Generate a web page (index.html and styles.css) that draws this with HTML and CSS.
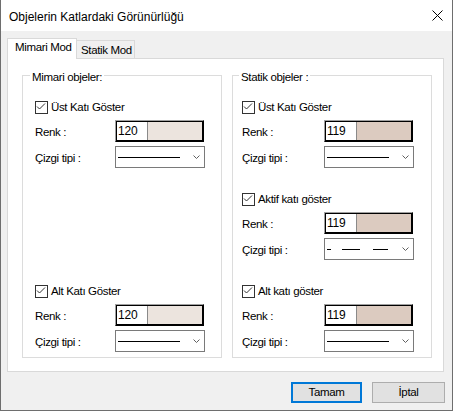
FILE: index.html
```html
<!DOCTYPE html>
<html>
<head>
<meta charset="utf-8">
<link rel="stylesheet" href="styles.css">
</head>
<body>
<div class="window">
  <div class="titlebar">
    <span class="title">Objelerin Katlardaki Görünürlüğü</span>
    <svg class="close" width="11" height="11" viewBox="0 0 11 11"><path d="M0.5 0.5L10.5 10.5M10.5 0.5L0.5 10.5" stroke="#000" stroke-width="1" fill="none"/></svg>
  </div>
  <div class="client">
    <div class="tabs">
      <div class="tab tab-active">Mimari Mod</div>
      <div class="tab tab-idle">Statik Mod</div>
    </div>
    <div class="page">
      <div class="group group-left">
        <div class="legend">Mimari objeler:</div>
        <div class="block block-first">
          <div class="check"><span class="box"><svg width="11" height="11" viewBox="0 0 11 11"><path d="M1 4.5L3.5 7L9 1.5" stroke="#333" stroke-width="1" fill="none"/></svg></span><span>Üst Katı Göster</span></div>
          <div class="row row-color"><span class="label">Renk :</span><div class="colorbox"><div class="colorinner"><span class="num">120</span><span class="swatch swatch-a"></span></div></div></div>
          <div class="row row-combo"><span class="label">Çizgi tipi :</span><div class="combo"><span class="solid"></span><svg class="chev" width="7" height="4" viewBox="0 0 7 4"><path d="M0.5 0.5L3.5 3.5L6.5 0.5" stroke="#606060" stroke-width="1" fill="none"/></svg></div></div>
        </div>
        <div class="block block-bottom">
          <div class="check"><span class="box"><svg width="11" height="11" viewBox="0 0 11 11"><path d="M1 4.5L3.5 7L9 1.5" stroke="#333" stroke-width="1" fill="none"/></svg></span><span>Alt Katı Göster</span></div>
          <div class="row row-color"><span class="label">Renk :</span><div class="colorbox"><div class="colorinner"><span class="num">120</span><span class="swatch swatch-a"></span></div></div></div>
          <div class="row row-combo"><span class="label">Çizgi tipi :</span><div class="combo"><span class="solid"></span><svg class="chev" width="7" height="4" viewBox="0 0 7 4"><path d="M0.5 0.5L3.5 3.5L6.5 0.5" stroke="#606060" stroke-width="1" fill="none"/></svg></div></div>
        </div>
      </div>
      <div class="group group-right">
        <div class="legend">Statik objeler :</div>
        <div class="block block-first">
          <div class="check"><span class="box"><svg width="11" height="11" viewBox="0 0 11 11"><path d="M1 4.5L3.5 7L9 1.5" stroke="#333" stroke-width="1" fill="none"/></svg></span><span>Üst Katı Göster</span></div>
          <div class="row row-color"><span class="label">Renk :</span><div class="colorbox"><div class="colorinner"><span class="num">119</span><span class="swatch swatch-b"></span></div></div></div>
          <div class="row row-combo"><span class="label">Çizgi tipi :</span><div class="combo"><span class="solid"></span><svg class="chev" width="7" height="4" viewBox="0 0 7 4"><path d="M0.5 0.5L3.5 3.5L6.5 0.5" stroke="#606060" stroke-width="1" fill="none"/></svg></div></div>
        </div>
        <div class="block block-next">
          <div class="check"><span class="box"><svg width="11" height="11" viewBox="0 0 11 11"><path d="M1 4.5L3.5 7L9 1.5" stroke="#333" stroke-width="1" fill="none"/></svg></span><span>Aktif katı göster</span></div>
          <div class="row row-color"><span class="label">Renk :</span><div class="colorbox"><div class="colorinner"><span class="num">119</span><span class="swatch swatch-b"></span></div></div></div>
          <div class="row row-combo"><span class="label">Çizgi tipi :</span><div class="combo"><svg class="dashed" width="62" height="1" viewBox="0 0 62 1"><rect x="0" y="0" width="4" height="1" fill="#000"/><rect x="15" y="0" width="18" height="1" fill="#000"/><rect x="46" y="0" width="15" height="1" fill="#000"/></svg><svg class="chev" width="7" height="4" viewBox="0 0 7 4"><path d="M0.5 0.5L3.5 3.5L6.5 0.5" stroke="#606060" stroke-width="1" fill="none"/></svg></div></div>
        </div>
        <div class="block block-next">
          <div class="check"><span class="box"><svg width="11" height="11" viewBox="0 0 11 11"><path d="M1 4.5L3.5 7L9 1.5" stroke="#333" stroke-width="1" fill="none"/></svg></span><span>Alt katı göster</span></div>
          <div class="row row-color"><span class="label">Renk :</span><div class="colorbox"><div class="colorinner"><span class="num">119</span><span class="swatch swatch-b"></span></div></div></div>
          <div class="row row-combo"><span class="label">Çizgi tipi :</span><div class="combo"><span class="solid"></span><svg class="chev" width="7" height="4" viewBox="0 0 7 4"><path d="M0.5 0.5L3.5 3.5L6.5 0.5" stroke="#606060" stroke-width="1" fill="none"/></svg></div></div>
        </div>
      </div>
    </div>
    <div class="buttons">
      <button class="btn btn-default">Tamam</button>
      <button class="btn btn-cancel">İptal</button>
    </div>
  </div>
</div>
</body>
</html>
```
FILE: styles.css
```css
html, body {
  margin: 0;
  padding: 0;
  background: #f0f0f0;
}
body {
  font-family: "Liberation Sans", Arial, sans-serif;
  font-size: 11.5px;
  line-height: 13px;
  letter-spacing: -0.35px;
  color: #000;
}
.window {
  width: 453px;
  height: 411px;
  box-sizing: border-box;
  border-left: 1px solid #6e6e6e;
  border-right: 1px solid #6e6e6e;
  border-bottom: 1px solid #6e6e6e;
  background: #f0f0f0;
  display: flex;
  flex-direction: column;
}
.titlebar {
  height: 31px;
  background: #fff;
  display: flex;
  align-items: center;
  justify-content: space-between;
  padding: 0 9px 0 8px;
  flex-shrink: 0;
}
.title {
  font-size: 12px;
  line-height: 14px;
  letter-spacing: 0;
  padding-top: 2px;
}
.close {
  display: block;
}
.client {
  padding: 7px 8px 0 6px;
  display: flex;
  flex-direction: column;
}
.tabs {
  display: flex;
  align-items: flex-end;
  height: 20px;
}
.tab {
  box-sizing: border-box;
  border: 1px solid #d9d9d9;
  border-bottom: 0;
  white-space: nowrap;
}
.tab-active {
  width: 70px;
  height: 21px;
  margin-bottom: -1px;
  background: #fff;
  padding: 2px 0 0 7px;
  position: relative;
  z-index: 1;
}
.tab-idle {
  width: 58px;
  height: 18px;
  border-left: 0;
  background: #f0f0f0;
  padding: 3px 0 0 4px;
}
.page {
  box-sizing: border-box;
  height: 314px;
  border: 1px solid #d9d9d9;
  background: #fff;
  padding: 16px 0 13px 14px;
  display: flex;
  gap: 10px;
}
.group {
  box-sizing: border-box;
  width: 200px;
  border: 1px solid #dcdcdc;
  display: flex;
  flex-direction: column;
  padding-bottom: 5px;
}
.group-left { padding-left: 12px; }
.group-right { padding-left: 9px; }
.legend {
  align-self: flex-start;
  background: #fff;
  padding: 0 2px;
  margin-top: -5px;
  height: 13px;
  white-space: nowrap;
}
.group-left .legend { margin-left: -5px; }
.group-right .legend { margin-left: -3px; }
.block {
  display: flex;
  flex-direction: column;
}
.block-first { margin-top: 17px; }
.block-next { margin-top: 25px; }
.block-bottom { margin-top: auto; }
.check {
  display: flex;
  align-items: center;
  height: 13px;
  gap: 3px;
  white-space: nowrap;
}
.box {
  width: 13px;
  height: 13px;
  box-sizing: border-box;
  border: 1px solid #333;
  background: #fff;
  display: block;
}
.box svg { display: block; }
.row {
  display: flex;
  align-items: center;
  height: 22px;
}
.row-color { margin-top: 6px; }
.row-combo { margin-top: 4px; }
.label {
  padding-top: 2px;
  white-space: nowrap;
}
.group-left .label { width: 80px; }
.group-right .label { width: 82px; }
.colorbox {
  box-sizing: border-box;
  width: 89px;
  height: 22px;
  border-top: 1px solid #a0a0a0;
  border-left: 1px solid #a0a0a0;
  border-right: 1px solid #000;
  border-bottom: 1px solid #000;
}
.colorinner {
  box-sizing: border-box;
  height: 100%;
  border: 1px solid #000;
  display: flex;
}
.num {
  width: 31px;
  box-sizing: border-box;
  background: #fff;
  border-right: 1px solid #8a8a8a;
  padding-left: 1px;
  line-height: 18px;
  font-size: 12px;
  letter-spacing: -0.2px;
}
.swatch { flex: 1; }
.swatch-a { background: #ece4de; }
.swatch-b { background: #dccbc0; }
.combo {
  box-sizing: border-box;
  width: 90px;
  height: 22px;
  border: 1px solid #7a7a7a;
  background: #fff;
  display: flex;
  align-items: center;
  padding-left: 2px;
}
.solid {
  display: block;
  width: 62px;
  height: 1px;
  background: #000;
}
.dashed { display: block; }
.chev {
  display: block;
  margin-left: 13px;
}
.buttons {
  display: flex;
  justify-content: flex-end;
  gap: 10px;
  margin-top: 10px;
  margin-right: -1px;
}
.btn {
  font: inherit;
  letter-spacing: inherit;
  color: #000;
  height: 21px;
  box-sizing: border-box;
  background: #e1e1e1;
  padding: 0;
  margin: 0;
  display: flex;
  align-items: center;
  justify-content: center;
}
.btn-default {
  width: 71px;
  border: 2px solid #0078d7;
}
.btn-cancel {
  width: 73px;
  border: 1px solid #adadad;
}
```
